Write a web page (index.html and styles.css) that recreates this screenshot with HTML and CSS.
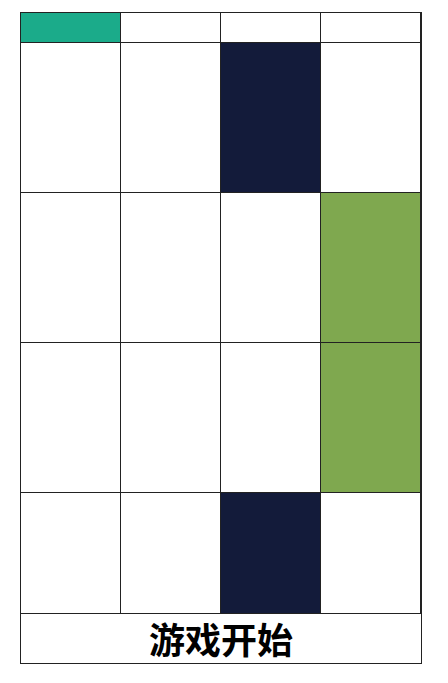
FILE: index.html
```html
<!DOCTYPE html>
<html lang="zh-CN">
<head>
  <meta charset="UTF-8" />
  <title>别踩白块</title>
  <link rel="stylesheet" href="styles.css">
</head>
<body>
  <div class="wrap">
    <div class="board">
      <div class="row row-top">
        <div class="cell start"></div>
        <div class="cell"></div>
        <div class="cell"></div>
        <div class="cell"></div>
      </div>
      <div class="row">
        <div class="cell"></div>
        <div class="cell"></div>
        <div class="cell black"></div>
        <div class="cell"></div>
      </div>
      <div class="row">
        <div class="cell"></div>
        <div class="cell"></div>
        <div class="cell"></div>
        <div class="cell green"></div>
      </div>
      <div class="row">
        <div class="cell"></div>
        <div class="cell"></div>
        <div class="cell"></div>
        <div class="cell green"></div>
      </div>
      <div class="row">
        <div class="cell"></div>
        <div class="cell"></div>
        <div class="cell black"></div>
        <div class="cell"></div>
      </div>
    </div>
    <div class="start-btn">游戏开始</div>
  </div>
</body>
</html>
```

FILE: styles.css
```css
body {
  margin: 0;
  padding: 12px 20px;
  background: #ffffff;
  font-family: "Noto Sans CJK SC", "Noto Sans", sans-serif;
}

.wrap {
  width: 402px;
}

.board {
  border: 1px solid #222222;
  height: 600px;
  overflow: hidden;
}

.row {
  display: flex;
  height: 150px;
}

.row-top {
  height: 30px;
}

.cell {
  box-sizing: border-box;
  width: 100px;
  height: 100%;
  border-right: 1px solid #222222;
  border-bottom: 1px solid #222222;
  background: #ffffff;
}

.start {
  background: #1bab8a;
}

.black {
  background: #131b3a;
}

.green {
  background: #7fa84f;
}

.start-btn {
  border: 1px solid #222222;
  border-top: none;
  height: 49px;
  line-height: 49px;
  text-align: center;
  font-size: 36px;
  font-weight: bold;
  color: #000000;
}
```
